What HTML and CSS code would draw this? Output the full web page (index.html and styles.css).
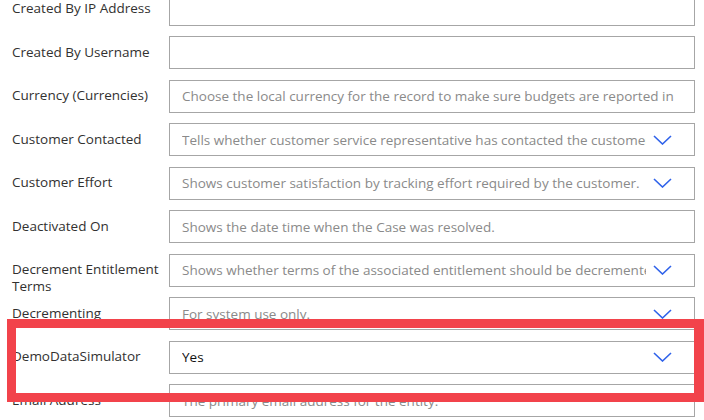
FILE: index.html
```html
<!DOCTYPE html>
<html>
<head>
<meta charset="utf-8">
<link rel="stylesheet" href="styles.css">
</head>
<body>
<div class="form">
  <div class="row"><div class="label">Created By IP Address</div><div class="field plain"><span class="val"></span></div></div>
  <div class="row"><div class="label">Created By Username</div><div class="field plain"><span class="val"></span></div></div>
  <div class="row"><div class="label">Currency (Currencies)</div><div class="field plain"><span class="val">Choose the local currency for the record to make sure budgets are reported in</span></div></div>
  <div class="row"><div class="label">Customer Contacted</div><div class="field"><span class="val">Tells whether customer service representative has contacted the customer</span><svg class="chev" viewBox="0 0 19 10"><path d="M1 1 L9.5 9 L18 1"/></svg></div></div>
  <div class="row"><div class="label">Customer Effort</div><div class="field"><span class="val">Shows customer satisfaction by tracking effort required by the customer.</span><svg class="chev" viewBox="0 0 19 10"><path d="M1 1 L9.5 9 L18 1"/></svg></div></div>
  <div class="row"><div class="label">Deactivated On</div><div class="field plain"><span class="val">Shows the date time when the Case was resolved.</span></div></div>
  <div class="row"><div class="label">Decrement Entitlement Terms</div><div class="field"><span class="val">Shows whether terms of the associated entitlement should be decremented</span><svg class="chev" viewBox="0 0 19 10"><path d="M1 1 L9.5 9 L18 1"/></svg></div></div>
  <div class="row"><div class="label">Decrementing</div><div class="field"><span class="val">For system use only.</span><svg class="chev" viewBox="0 0 19 10"><path d="M1 1 L9.5 9 L18 1"/></svg></div></div>
  <div class="row"><div class="label">DemoDataSimulator</div><div class="field"><span class="val filled">Yes</span><svg class="chev" viewBox="0 0 19 10"><path d="M1 1 L9.5 9 L18 1"/></svg></div></div>
  <div class="row"><div class="label">Email Address</div><div class="field plain"><span class="val">The primary email address for the entity.</span></div></div>
</div>
<div class="highlight"></div>
</body>
</html>
```

FILE: styles.css
```css
html, body {
  margin: 0;
  padding: 0;
  background: #ffffff;
  overflow: hidden;
}
body {
  width: 704px;
  height: 420px;
  position: relative;
  font-family: "Open Sans", "Noto Sans", sans-serif;
  font-size: 13.5px;
}
.form {
  display: flex;
  flex-direction: column;
  gap: 10.5px;
  margin-top: -7.5px;
  padding-left: 12px;
}
.row {
  display: flex;
  height: 33px;
  align-items: flex-start;
}
.label {
  width: 157px;
  flex: none;
  color: #323130;
  line-height: 17px;
  padding-top: 7.5px;
}
.field {
  box-sizing: border-box;
  width: 526px;
  height: 33px;
  border: 1px solid #a6a6a6;
  display: flex;
  align-items: center;
  padding: 0 22px 0 12px;
  color: #8a8a8a;
}
.field.plain {
  padding-right: 12px;
}
.val {
  flex: 1;
  min-width: 0;
  overflow: hidden;
  white-space: nowrap;
}
.val.filled {
  color: #111111;
}
.chev {
  width: 19px;
  height: 10px;
  flex: none;
  margin-left: 7px;
}
.chev path {
  fill: none;
  stroke: #2f62ea;
  stroke-width: 1.6;
}
.highlight {
  position: absolute;
  left: 7px;
  top: 319px;
  width: 697px;
  height: 83px;
  box-sizing: border-box;
  border: 9px solid #f2434b;
  border-right-width: 10px;
}
```
